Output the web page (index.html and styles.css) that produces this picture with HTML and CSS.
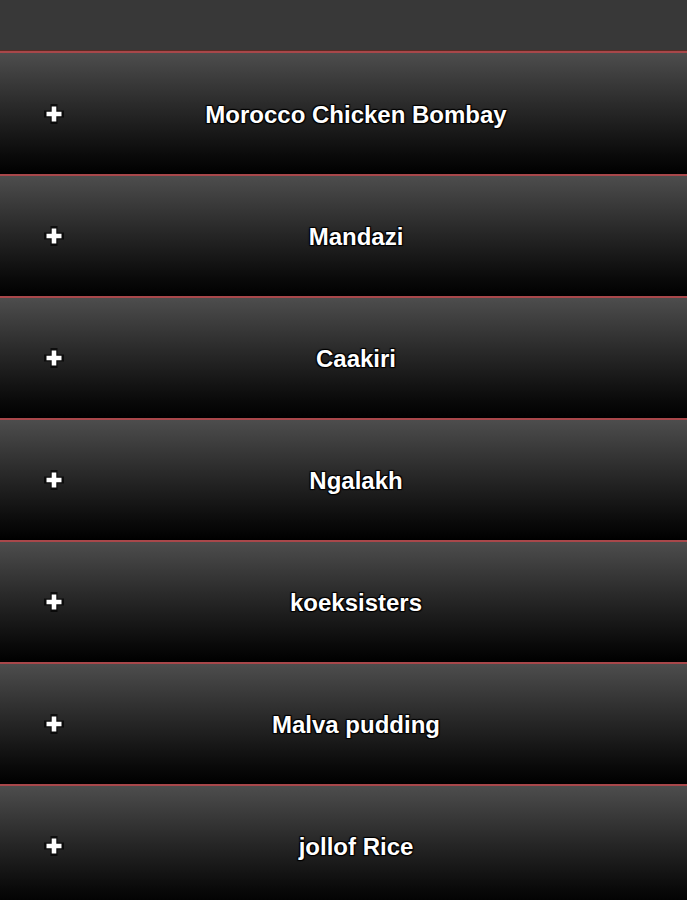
FILE: index.html
```html
<!DOCTYPE html>
<html>
<head>
<meta charset="utf-8">
<link rel="stylesheet" href="styles.css">
</head>
<body>
<div class="top"></div>
<ul class="list">
  <li class="row"><span class="plus"><svg width="20" height="20" viewBox="0 0 20 20"><path d="M10 2.5v15M2.5 10h15" stroke="#000" stroke-width="7" stroke-linecap="square" opacity=".65"/><path d="M10 2.5v15M2.5 10h15" stroke="#fff" stroke-width="4.6"/></svg></span><span class="label">Morocco Chicken Bombay</span></li>
  <li class="row"><span class="plus"><svg width="20" height="20" viewBox="0 0 20 20"><path d="M10 2.5v15M2.5 10h15" stroke="#000" stroke-width="7" stroke-linecap="square" opacity=".65"/><path d="M10 2.5v15M2.5 10h15" stroke="#fff" stroke-width="4.6"/></svg></span><span class="label">Mandazi</span></li>
  <li class="row"><span class="plus"><svg width="20" height="20" viewBox="0 0 20 20"><path d="M10 2.5v15M2.5 10h15" stroke="#000" stroke-width="7" stroke-linecap="square" opacity=".65"/><path d="M10 2.5v15M2.5 10h15" stroke="#fff" stroke-width="4.6"/></svg></span><span class="label">Caakiri</span></li>
  <li class="row"><span class="plus"><svg width="20" height="20" viewBox="0 0 20 20"><path d="M10 2.5v15M2.5 10h15" stroke="#000" stroke-width="7" stroke-linecap="square" opacity=".65"/><path d="M10 2.5v15M2.5 10h15" stroke="#fff" stroke-width="4.6"/></svg></span><span class="label">Ngalakh</span></li>
  <li class="row"><span class="plus"><svg width="20" height="20" viewBox="0 0 20 20"><path d="M10 2.5v15M2.5 10h15" stroke="#000" stroke-width="7" stroke-linecap="square" opacity=".65"/><path d="M10 2.5v15M2.5 10h15" stroke="#fff" stroke-width="4.6"/></svg></span><span class="label">koeksisters</span></li>
  <li class="row"><span class="plus"><svg width="20" height="20" viewBox="0 0 20 20"><path d="M10 2.5v15M2.5 10h15" stroke="#000" stroke-width="7" stroke-linecap="square" opacity=".65"/><path d="M10 2.5v15M2.5 10h15" stroke="#fff" stroke-width="4.6"/></svg></span><span class="label">Malva pudding</span></li>
  <li class="row"><span class="plus"><svg width="20" height="20" viewBox="0 0 20 20"><path d="M10 2.5v15M2.5 10h15" stroke="#000" stroke-width="7" stroke-linecap="square" opacity=".65"/><path d="M10 2.5v15M2.5 10h15" stroke="#fff" stroke-width="4.6"/></svg></span><span class="label">jollof Rice</span></li>
</ul>
</body>
</html>
```
FILE: styles.css
```css
html, body {
  margin: 0;
  padding: 0;
  background: #000;
}
body {
  width: 687px;
  height: 900px;
  overflow: hidden;
  font-family: "Liberation Sans", Arial, sans-serif;
}
.top {
  height: 50px;
  background: #383838;
  border-bottom: 1px solid #5a2a22;
}
.list {
  list-style: none;
  margin: 0;
  padding: 0;
}
.row {
  display: flex;
  align-items: center;
  height: 120px;
  border-top: 2px solid #a8474a;
  background: linear-gradient(to bottom, #4d4d4d 0%, #2b2b2b 42%, #0a0a0a 85%, #000 100%);
}
.row:first-child {
  height: 121px;
}
.plus {
  display: flex;
  width: 20px;
  height: 20px;
  margin-left: 44px;
}
.label {
  flex: 1;
  text-align: center;
  margin-right: 43px;
  margin-left: 4px;
  padding-top: 2px;
  color: #fff;
  font-weight: bold;
  font-size: 24px;
  text-shadow: 1px 1px 1px #000, -1px -1px 1px #000, 1px -1px 1px #000, -1px 1px 1px #000;
}
```
